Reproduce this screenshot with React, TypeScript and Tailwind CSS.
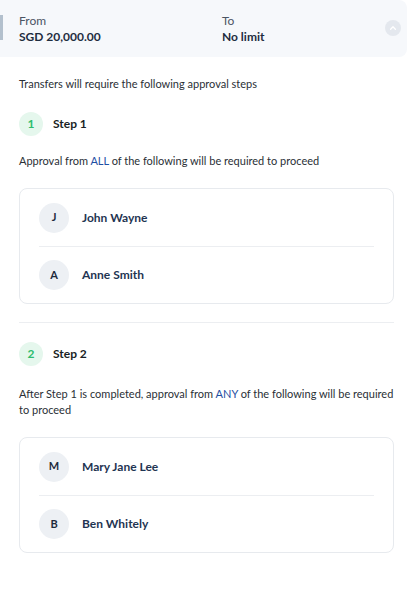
const approvers1 = [
  { initial: 'J', name: 'John Wayne' },
  { initial: 'A', name: 'Anne Smith' },
];

const approvers2 = [
  { initial: 'M', name: 'Mary Jane Lee' },
  { initial: 'B', name: 'Ben Whitely' },
];

const StepBadge = ({ num, label }: { num: number; label: string }) => (
  <div className="flex items-center gap-[10px]">
    <div className="w-6 h-6 rounded-full bg-[#e5f7ed] flex items-center justify-center text-[12px] font-bold text-[#2dbd6e]">
      {num}
    </div>
    <span className="text-[12px] font-bold text-[#1a1f26]">{label}</span>
  </div>
);

const ApproverCard = ({ people }: { people: { initial: string; name: string }[] }) => (
  <div className="border border-[#e7eaee] rounded-lg px-[19px]">
    {people.map((p, i) => (
      <div
        key={p.name}
        className={`flex items-center gap-[13px] h-[57px] ${i > 0 ? 'border-t border-[#eceef1]' : ''}`}
      >
        <div className="w-[30px] h-[30px] rounded-full bg-[#edf0f4] flex items-center justify-center text-[11px] font-bold text-[#1d2b3c]">
          {p.initial}
        </div>
        <span className="text-[12px] font-bold text-[#1f3552]">{p.name}</span>
      </div>
    ))}
  </div>
);

export default function App() {
  return (
    <div className="w-[413px] min-h-[591px] bg-white font-['Lato',sans-serif] text-[#2a2f36]">
      {/* limit range header */}
      <div className="relative w-[407px] h-[57px] bg-[#f6f8fb] rounded-r-lg flex items-center pl-[19px] pr-[6px]">
        <div className="absolute left-0 top-[15px] w-[3px] h-[25px] bg-[#b3c0cd]"></div>
        <div className="w-[203px]">
          <p className="text-[12px] text-[#4b5563] leading-[16px]">From</p>
          <p className="text-[12px] font-bold text-[#1e2d3f] leading-[16px]">SGD 20,000.00</p>
        </div>
        <div className="flex-1">
          <p className="text-[12px] text-[#4b5563] leading-[16px]">To</p>
          <p className="text-[12px] font-bold text-[#1e2d3f] leading-[16px]">No limit</p>
        </div>
        <div className="w-4 h-4 rounded-full bg-[#e4e8ee] flex items-center justify-center -mt-[1px]">
          <svg width="8" height="8" viewBox="0 0 10 10" fill="none">
            <path d="M2 6.5L5 3.5L8 6.5" stroke="white" strokeWidth="1.6" strokeLinecap="round" strokeLinejoin="round" />
          </svg>
        </div>
      </div>

      <div className="px-[19px] pt-[19px]">
        <p className="text-[11px] leading-[16px]">Transfers will require the following approval steps</p>

        <div className="mt-[20px]">
          <StepBadge num={1} label="Step 1" />
        </div>
        <p className="text-[11px] leading-[16px] mt-[17px]">
          Approval from <span className="text-[#1f4fa3]">ALL</span> of the following will be required to proceed
        </p>
        <div className="mt-[19px]">
          <ApproverCard people={approvers1} />
        </div>

        <div className="border-t border-[#eceef1] mt-[18px]"></div>

        <div className="mt-[19px]">
          <StepBadge num={2} label="Step 2" />
        </div>
        <p className="text-[11px] leading-[16px] mt-[20px]">
          After Step 1 is completed, approval from <span className="text-[#1f4fa3]">ANY</span> of the following will be required to proceed
        </p>
        <div className="mt-[19px]">
          <ApproverCard people={approvers2} />
        </div>
      </div>
    </div>
  );
}
